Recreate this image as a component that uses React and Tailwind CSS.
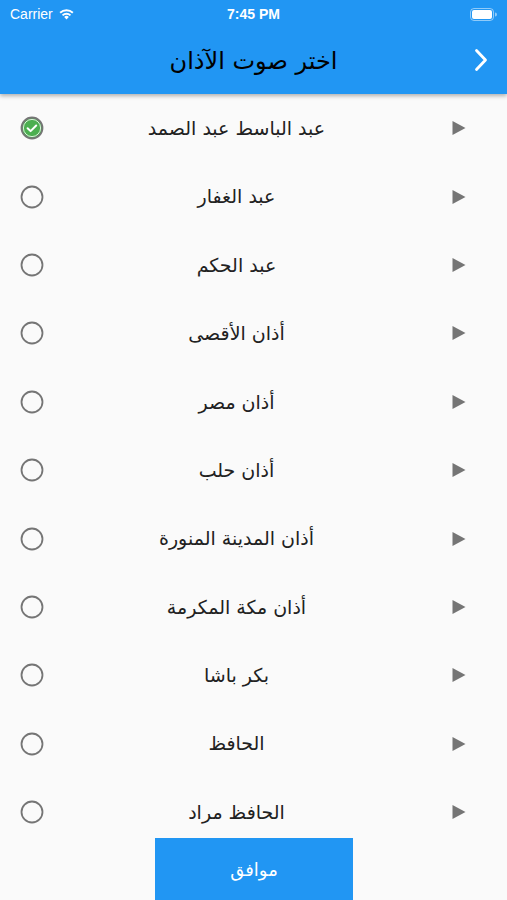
import React from "react";

const items = [
  "عبد الباسط عبد الصمد",
  "عبد الغفار",
  "عبد الحكم",
  "أذان الأقصى",
  "أذان مصر",
  "أذان حلب",
  "أذان المدينة المنورة",
  "أذان مكة المكرمة",
  "بكر باشا",
  "الحافظ",
  "الحافظ مراد",
];

function Radio({ checked }) {
  return (
    <svg width="24" height="24" viewBox="0 0 24 24">
      <circle cx="12" cy="12" r="10.5" fill={checked ? "#4caf50" : "none"} stroke="#757575" strokeWidth="1.8" />
      {checked && (
        <>
          <circle cx="12" cy="12" r="8.6" fill="#4caf50" stroke="#ffffff" strokeWidth="0.8" />
          <path d="M7.6 12.2l3 2.9 5.6-5.6" fill="none" stroke="#fff" strokeWidth="2" strokeLinecap="round" strokeLinejoin="round" />
        </>
      )}
    </svg>
  );
}

export default function App() {
  return (
    <div className="relative w-[507px] h-[900px] overflow-hidden bg-[#fafafa]" style={{ fontFamily: '"DejaVu Sans", sans-serif' }}>
      <div className="relative z-10 bg-[#2196f3] h-[94px] shadow-[0_2px_4px_rgba(0,0,0,0.3)]">
        <div className="h-[28px] flex items-center justify-between px-[10px] text-white text-[14px]" style={{ fontFamily: '"Liberation Sans", Arial, sans-serif' }}>
          <div className="flex items-center gap-[5px] w-[120px]">
            <span>Carrier</span>
            <svg width="17" height="12" viewBox="0 0 17 12">
              <path d="M8.5 11.5l2.3-2.6a3.4 3.4 0 0 0-4.6 0z" fill="#fff" />
              <path d="M3.9 6.7a6.6 6.6 0 0 1 9.2 0l-1.3 1.4a4.7 4.7 0 0 0-6.6 0z" fill="#fff" />
              <path d="M1.5 4.1a10 10 0 0 1 14 0l-1.3 1.4a8.1 8.1 0 0 0-11.4 0z" fill="#fff" />
            </svg>
          </div>
          <span className="font-semibold">7:45 PM</span>
          <div className="w-[120px] flex justify-end">
            <svg width="27" height="13" viewBox="0 0 27 13">
              <rect x="0.5" y="0.5" width="23" height="12" rx="3.5" fill="none" stroke="rgba(255,255,255,0.5)" />
              <rect x="2" y="2" width="20" height="9" rx="2" fill="#fff" />
              <path d="M25 4.5v4a2 2 0 0 0 0-4z" fill="rgba(255,255,255,0.5)" />
            </svg>
          </div>
        </div>
        <div className="relative h-[66px] flex items-center justify-center">
          <span dir="rtl" className="text-[24px] text-black leading-none">اختر صوت الآذان</span>
          <svg className="absolute right-[19px] top-[20px]" width="14" height="24" viewBox="0 0 14 24">
            <path d="M2.5 2.5l9 9.5-9 9.5" fill="none" stroke="#fff" strokeWidth="2.8" strokeLinecap="round" strokeLinejoin="round" />
          </svg>
        </div>
      </div>
      <div className="flex flex-col">
        {items.map((t, i) => (
          <div key={i} className="h-[68.4px] flex items-center pl-[20px] pr-[41px]">
            <Radio checked={i === 0} />
            <div dir="rtl" className="flex-1 mr-[23px] text-center text-[19px] text-[#212121]">{t}</div>
            <svg width="14" height="16" viewBox="0 0 14 16">
              <path d="M0.5 1l13 7-13 7z" fill="#757575" />
            </svg>
          </div>
        ))}
      </div>
      <div className="absolute left-[155px] top-[838px] w-[198px] h-[62px] bg-[#2196f3] flex items-center justify-center">
        <span dir="rtl" className="text-white text-[18px]">موافق</span>
      </div>
    </div>
  );
}
